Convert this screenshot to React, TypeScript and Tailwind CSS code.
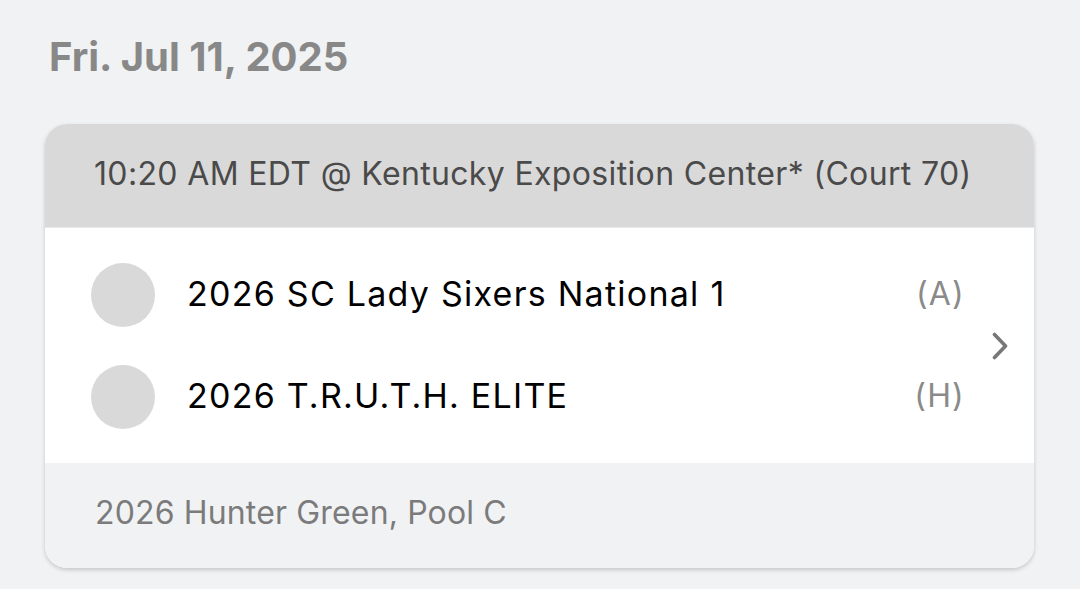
const teams = [
  { name: "2026 SC Lady Sixers National 1", side: "(A)" },
  { name: "2026 T.R.U.T.H. ELITE", side: "(H)" },
];

export default function App() {
  return (
    <main
      className="min-h-screen bg-[#f1f2f4] px-[45px] pt-[29px]"
      style={{ fontFamily: "Inter, 'Noto Sans', sans-serif" }}
    >
      <h1 className="pl-[4px] text-[40px] font-bold leading-[56px] text-[#888888]">
        Fri. Jul 11, 2025
      </h1>

      <div className="mt-[39px] w-[989px] overflow-hidden rounded-[22px] bg-white shadow-[0_2px_4px_rgba(0,0,0,0.18)]">
        <div className="flex h-[104px] items-center border-b border-[#e8e8e8] bg-[#d9d9d9] pb-[4px] pl-[49px] text-[32px] tracking-[0.35px] text-[#4a4a4a]">
          10:20 AM EDT @ Kentucky Exposition Center* (Court 70)
        </div>

        <div className="flex items-center bg-white pb-[34px] pl-[46px] pr-[26px] pt-[35px]">
          <div className="flex flex-1 flex-col gap-[38px]">
            {teams.map((t) => (
              <div key={t.name} className="flex h-[64px] items-center">
                <div className="h-[64px] w-[64px] rounded-full bg-[#d9d9d9]" />
                <span className="ml-[32px] flex-1 pb-[4px] text-[34px] tracking-[1.25px] text-black">
                  {t.name}
                </span>
                <span className="pb-[2px] text-[32px] tracking-[1.2px] text-[#8a8a8a]">{t.side}</span>
              </div>
            ))}
          </div>
          <svg
            className="ml-[27px] h-[28px] w-[16px] text-[#777777]"
            viewBox="0 0 16 28"
            fill="none"
            stroke="currentColor"
            strokeWidth={3.6}
            strokeLinecap="round"
            strokeLinejoin="round"
          >
            <path d="M2.5 2.5 13.5 14 2.5 25.5" />
          </svg>
        </div>

        <div className="flex h-[105px] items-center bg-[#f1f2f4] pb-[6px] pl-[50px] text-[32px] tracking-[0.15px] text-[#7b7b7b]">
          2026 Hunter Green, Pool C
        </div>
      </div>
    </main>
  );
}
